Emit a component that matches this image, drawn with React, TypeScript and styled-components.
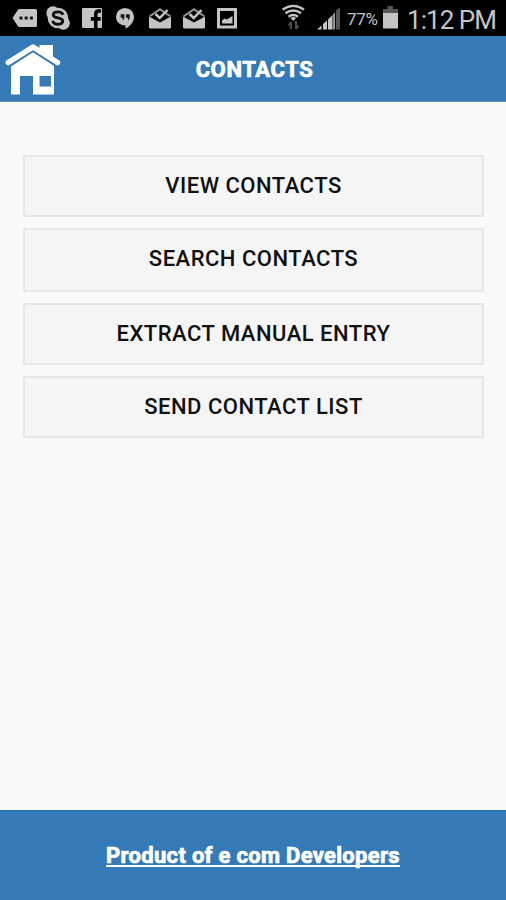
import React from "react";
import styled, { createGlobalStyle } from "styled-components";

const GlobalStyle = createGlobalStyle`
  * { box-sizing: border-box; }
  body { margin: 0; background: #f9f9f9; font-family: Roboto, "Liberation Sans", sans-serif; }
`;

const Screen = styled.div`
  display: flex;
  flex-direction: column;
  height: 100vh;
  min-height: 900px;
  overflow: hidden;
`;

const StatusBar = styled.div`
  display: flex;
  align-items: center;
  height: 36px;
  flex: none;
  padding: 0 10px 0 12px;
  background: #000;
  color: #c4c4c4;
`;

const IconGroup = styled.div`
  display: flex;
  align-items: center;
  flex: 1;
`;

const StatusIcon = styled.svg<{ $gap?: number }>`
  display: block;
  flex: none;
  margin-right: ${(p) => p.$gap ?? 0}px;
`;

const BatteryText = styled.span`
  width: 36px;
  font-size: 17px;
  line-height: 36px;
  letter-spacing: -0.3px;
  padding-top: 1px;
`;

const Clock = styled.span`
  width: 89px;
  margin-left: 9px;
  font-size: 26px;
  line-height: 36px;
  padding-top: 3px;
  white-space: nowrap;
  letter-spacing: -0.95px;
`;

const Header = styled.header`
  display: grid;
  grid-template-columns: 66px 1fr 66px;
  align-items: center;
  flex: none;
  height: 66px;
  background: #337ab7;
  border-bottom: 1px solid #5d93c3;
`;

const HomeButton = styled.button`
  display: block;
  border: 0;
  padding: 0;
  height: 65px;
  background: transparent;
`;

const Title = styled.h1`
  margin: 0 0 0 3px;
  text-align: center;
  font-size: 22px;
  line-height: 28px;
  font-weight: 700;
  letter-spacing: 0.6px;
  color: #fff;
  -webkit-text-stroke: 0.7px #fff;
  padding-top: 2px;
`;

const Menu = styled.main`
  display: flex;
  flex-direction: column;
  flex: 1;
  gap: 11px;
  padding: 53px 22px 0 23px;
`;

const MenuButton = styled.button<{ $height: number; $lift: number }>`
  flex: none;
  height: ${(p) => p.$height}px;
  padding: 0 0 ${(p) => p.$lift}px;
  border: 2px solid #e6e6e6;
  background: #f5f5f5;
  color: #111;
  font-family: inherit;
  font-size: 22px;
  font-weight: 500;
  letter-spacing: 0.5px;
`;

const Footer = styled.footer`
  display: flex;
  justify-content: center;
  align-items: center;
  flex: none;
  height: 90px;
  background: #337ab7;
  border-top: 1px solid #1e6fae;
`;

const FooterLink = styled.a`
  color: #fff;
  font-size: 22px;
  font-weight: 700;
  letter-spacing: 0.3px;
  -webkit-text-stroke: 0.7px #fff;
  text-decoration: underline;
  text-decoration-thickness: 2px;
  text-underline-offset: 2px;
  text-decoration-skip-ink: none;
`;

const MailCheck = ({ gap }: { gap: number }) => (
  <StatusIcon $gap={gap} width="22" height="36" viewBox="0 0 22 36" fill="#c4c4c4">
    <path d="M0 15.500 11 8l11 7.500-1.500 1.500L11 10.500 1.500 17z" fill="#8f8f8f" />
    <path d="M0 16.500 11 22.500l11-6V27q0 1.500-1.500 1.500h-19Q0 28.500 0 27z" />
    <path d="m6.500 14 4.200 4L18.500 10" fill="none" stroke="#c4c4c4" strokeWidth="2.500" />
  </StatusIcon>
);

const menuItems = [
  { label: "VIEW CONTACTS", height: 62, lift: 2 },
  { label: "SEARCH CONTACTS", height: 64, lift: 4 },
  { label: "EXTRACT MANUAL ENTRY", height: 62, lift: 2 },
  { label: "SEND CONTACT LIST", height: 62, lift: 2 },
];

export default function App() {
  return (
    <>
      <GlobalStyle />
      <Screen>
        <StatusBar>
          <IconGroup>
            <StatusIcon $gap={9} width="25" height="36" viewBox="12 0 25 36" fill="#c4c4c4">
              <path d="M19.500 9H35.500q1.500 0 1.500 1.500v15q0 1.500-1.500 1.500h-16q-1 0-1.600-.8L12.500 18l5.400-8.200q.6-.8 1.600-.8z" />
              <path d="M19.500 16.500h3v3h-3zm5.200 0h3v3h-3zm5.200 0h3v3h-3z" fill="#161616" />
            </StatusIcon>
            <StatusIcon $gap={12} width="24" height="36" viewBox="46 0 24 36" fill="#c4c4c4">
              <circle cx="58" cy="18" r="10.300" />
              <circle cx="53" cy="13" r="6.700" />
              <circle cx="63.300" cy="23.200" r="6.500" />
              <path d="M63 14.800c-.7-2.200-2.700-2.900-5-2.900-2.800 0-4.700 1-4.700 3 0 4.200 9.400 1.900 9.400 6.200 0 2.200-2 3.200-4.700 3.200-2.900 0-4.700-1-5.400-3.400" fill="none" stroke="#111" strokeWidth="2.900" />
            </StatusIcon>
            <StatusIcon $gap={14} width="20" height="36" viewBox="82 0 20 36" fill="#c4c4c4">
              <path d="M83 8h18q1 0 1 1v18q0 1-1 1h-3.500v-7.300h3.200V17h-3.200v-2.500q0-1.800 1.800-1.800h1.700V9.200h-2.500q-4.500 0-4.500 4.700V17h-3.200v3.700H94V28H83q-1 0-1-1V9q0-1 1-1z" />
            </StatusIcon>
            <StatusIcon $gap={15} width="18" height="36" viewBox="116 0 18 36">
              <path d="M125 8a9 8.800 0 0 1 9 8.800c0 5.200-3.700 9.200-8.500 12V25.500C120 25.500 116 22 116 16.800A9 8.800 0 0 1 125 8z" fill="#c4c4c4" />
              <path d="M120.700 14.200h3.700v3.600q0 2-1.800 2.400v-2.400h-1.900zm5.300 0h3.700v3.600q0 2-1.800 2.400v-2.400H126z" fill="#161616" />
            </StatusIcon>
            <MailCheck gap={12} />
            <MailCheck gap={12} />
            <StatusIcon width="20" height="36" viewBox="217 0 20 36">
              <path d="M218.500 9.500h17v17.500h-17z" fill="none" stroke="#c4c4c4" strokeWidth="3" />
              <path d="M222 23.500v-3l2.500-2 2.500 1 5.500-3.500v7.500z" fill="#c4c4c4" />
            </StatusIcon>
          </IconGroup>
          <StatusIcon $gap={11} width="25" height="36" viewBox="281 0 25 36" fill="none">
            <path d="M282.500 9.600q10.800-7.600 21.500 0M285.500 13.200q7.800-5.400 15.500 0M288.500 16.700q4.800-3.400 9.500 0" stroke="#c4c4c4" strokeWidth="2.300" />
            <path d="m290.500 18 2.800-1.200 2.800 1.200-2.800 3z" fill="#c4c4c4" />
            <path d="M291 29v-7m-2.500 3.500L291 22M296 21v8m2.500-3.500L296 29" stroke="#4c4c4c" strokeWidth="2" />
          </StatusIcon>
          <StatusIcon $gap={6} width="24" height="36" viewBox="316 0 24 36" fill="#c4c4c4">
            <path d="m316 29.500 4.500-4v4zm6-5.500 4-3.500v9H322zm5-4.500 4.500-4.500v14.500H327z" />
            <path d="M332.300 14v15.500h1.500V12.500z" />
            <path d="M335 10.500 339 7.500v22h-4z" fill="#555" />
          </StatusIcon>
          <BatteryText>77%</BatteryText>
          <StatusIcon width="15" height="36" viewBox="382 0 15 36">
            <path d="M386.500 6h5.500v3h5v5h-15V9h4.500z" fill="#555" />
            <path d="M382 13h15v15.500h-15z" fill="#c4c4c4" />
          </StatusIcon>
          <Clock>1:12 PM</Clock>
        </StatusBar>
        <Header>
          <HomeButton aria-label="Home">
            <svg width="66" height="65" viewBox="0 36 66 65">
              <path d="M11 61 33 45l21 16v33.500H33V76H20v18.500h-9z" fill="#fff" />
              <path d="M39.500 45H53v17l-13.500-9z" fill="#fff" />
              <path d="M9 65 33 49.500 57 65" fill="none" stroke="#337ab7" strokeWidth="4.500" />
              <path d="M8.300 62.500 33 47l24.500 15.500" fill="none" stroke="#fff" strokeWidth="5.500" strokeLinecap="round" strokeLinejoin="round" />
              <path d="M39.500 76H51v10.500H39.500z" fill="#337ab7" />
            </svg>
          </HomeButton>
          <Title>CONTACTS</Title>
        </Header>
        <Menu>
          {menuItems.map((item) => (
            <MenuButton key={item.label} $height={item.height} $lift={item.lift}>
              {item.label}
            </MenuButton>
          ))}
        </Menu>
        <Footer>
          <FooterLink>Product of e com Developers</FooterLink>
        </Footer>
      </Screen>
    </>
  );
}
